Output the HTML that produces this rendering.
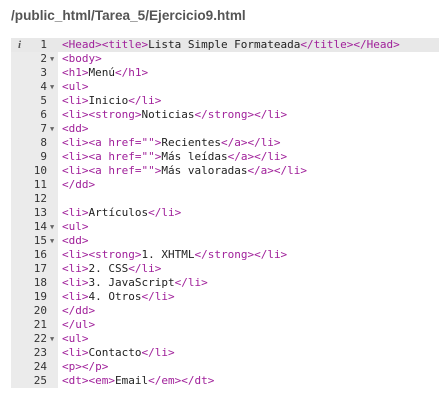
<!DOCTYPE html><html><head><style>
body{margin:0;background:#fff;width:439px;height:407px;overflow:hidden;position:relative}
h1{position:absolute;left:11px;top:8px;margin:0;font:bold 13.6px "Liberation Sans",sans-serif;color:#555}
.ed{position:absolute;left:11px;top:38px;right:0}
.gut{position:absolute;left:0;top:0;width:47px;height:350px;background:#ebebeb}
.l{position:relative;height:14px;font:11px/14px "DejaVu Sans Mono",monospace;white-space:pre;color:#222}
.l.a{background:#e8e8e8}
.n{position:absolute;left:0;width:36px;text-align:right;color:#333}
.f{position:absolute;left:39px;font-size:7px;color:#666}
.c{position:absolute;left:51px}
.t{color:#a0209a}
.i{position:absolute;left:7px;font-style:italic;color:#555;font-family:"Liberation Serif",serif;font-weight:bold}
</style></head><body>
<h1>/public_html/Tarea_5/Ejercicio9.html</h1>
<div class="ed"><div class="gut"></div>
<div class="l a"><span class="i">i</span><span class="n">1</span><span class="c"><span class="t">&lt;Head&gt;&lt;title&gt;</span>Lista Simple Formateada<span class="t">&lt;/title&gt;&lt;/Head&gt;</span></span></div>
<div class="l"><span class="n">2</span><span class="f">▼</span><span class="c"><span class="t">&lt;body&gt;</span></span></div>
<div class="l"><span class="n">3</span><span class="c"><span class="t">&lt;h1&gt;</span>Menú<span class="t">&lt;/h1&gt;</span></span></div>
<div class="l"><span class="n">4</span><span class="f">▼</span><span class="c"><span class="t">&lt;ul&gt;</span></span></div>
<div class="l"><span class="n">5</span><span class="c"><span class="t">&lt;li&gt;</span>Inicio<span class="t">&lt;/li&gt;</span></span></div>
<div class="l"><span class="n">6</span><span class="c"><span class="t">&lt;li&gt;&lt;strong&gt;</span>Noticias<span class="t">&lt;/strong&gt;&lt;/li&gt;</span></span></div>
<div class="l"><span class="n">7</span><span class="f">▼</span><span class="c"><span class="t">&lt;dd&gt;</span></span></div>
<div class="l"><span class="n">8</span><span class="c"><span class="t">&lt;li&gt;&lt;a href=""&gt;</span>Recientes<span class="t">&lt;/a&gt;&lt;/li&gt;</span></span></div>
<div class="l"><span class="n">9</span><span class="c"><span class="t">&lt;li&gt;&lt;a href=""&gt;</span>Más leídas<span class="t">&lt;/a&gt;&lt;/li&gt;</span></span></div>
<div class="l"><span class="n">10</span><span class="c"><span class="t">&lt;li&gt;&lt;a href=""&gt;</span>Más valoradas<span class="t">&lt;/a&gt;&lt;/li&gt;</span></span></div>
<div class="l"><span class="n">11</span><span class="c"><span class="t">&lt;/dd&gt;</span></span></div>
<div class="l"><span class="n">12</span></div>
<div class="l"><span class="n">13</span><span class="c"><span class="t">&lt;li&gt;</span>Artículos<span class="t">&lt;/li&gt;</span></span></div>
<div class="l"><span class="n">14</span><span class="f">▼</span><span class="c"><span class="t">&lt;ul&gt;</span></span></div>
<div class="l"><span class="n">15</span><span class="f">▼</span><span class="c"><span class="t">&lt;dd&gt;</span></span></div>
<div class="l"><span class="n">16</span><span class="c"><span class="t">&lt;li&gt;&lt;strong&gt;</span>1. XHTML<span class="t">&lt;/strong&gt;&lt;/li&gt;</span></span></div>
<div class="l"><span class="n">17</span><span class="c"><span class="t">&lt;li&gt;</span>2. CSS<span class="t">&lt;/li&gt;</span></span></div>
<div class="l"><span class="n">18</span><span class="c"><span class="t">&lt;li&gt;</span>3. JavaScript<span class="t">&lt;/li&gt;</span></span></div>
<div class="l"><span class="n">19</span><span class="c"><span class="t">&lt;li&gt;</span>4. Otros<span class="t">&lt;/li&gt;</span></span></div>
<div class="l"><span class="n">20</span><span class="c"><span class="t">&lt;/dd&gt;</span></span></div>
<div class="l"><span class="n">21</span><span class="c"><span class="t">&lt;/ul&gt;</span></span></div>
<div class="l"><span class="n">22</span><span class="f">▼</span><span class="c"><span class="t">&lt;ul&gt;</span></span></div>
<div class="l"><span class="n">23</span><span class="c"><span class="t">&lt;li&gt;</span>Contacto<span class="t">&lt;/li&gt;</span></span></div>
<div class="l"><span class="n">24</span><span class="c"><span class="t">&lt;p&gt;&lt;/p&gt;</span></span></div>
<div class="l"><span class="n">25</span><span class="c"><span class="t">&lt;dt&gt;&lt;em&gt;</span>Email<span class="t">&lt;/em&gt;&lt;/dt&gt;</span></span></div>
</div>
</body></html>
